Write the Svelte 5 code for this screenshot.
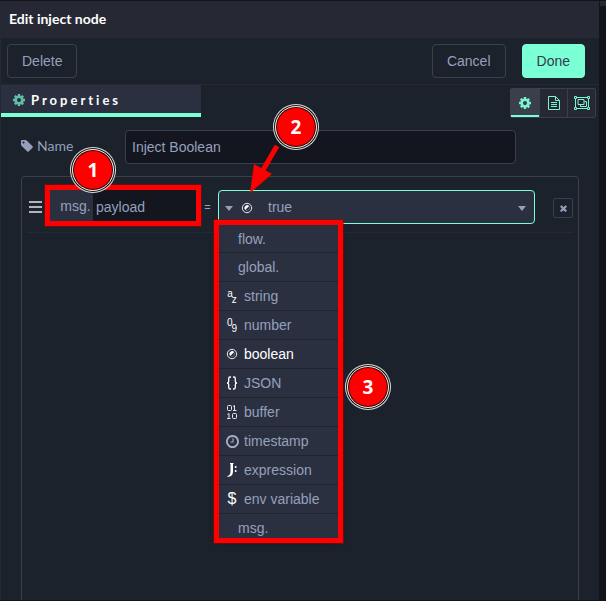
<script>
  const types = [
    { label: 'flow.' },
    { label: 'global.' },
    { label: 'string', icon: 'az' },
    { label: 'number', icon: '09' },
    { label: 'boolean', icon: 'bool' },
    { label: 'JSON', icon: 'json' },
    { label: 'buffer', icon: 'buffer' },
    { label: 'timestamp', icon: 'clock' },
    { label: 'expression', icon: 'expr' },
    { label: 'env variable', icon: 'env' },
    { label: 'msg.' }
  ];

  let name = $state('Inject Boolean');
  let property = $state('payload');
  let value = $state('true');
  let selected = $state('boolean');
  let pane = $state('properties');
</script>

{#snippet cog()}
  <svg class="cog" viewBox="128 128 1536 1536" aria-hidden="true"><path fill="currentColor" d="M1152 896q0-106-75-181t-181-75-181 75-75 181 75 181 181 75 181-75 75-181zm512-109v222q0 12-8 23t-20 13l-185 28q-19 54-39 91 35 50 107 138 10 12 10 25t-9 23q-27 37-99 108t-94 71q-12 0-26-9l-138-108q-44 23-91 38-16 136-29 186-7 28-36 28h-222q-14 0-24.5-8.5t-11.5-21.5l-28-184q-49-16-90-37l-141 107q-10 9-25 9-14 0-25-11-126-114-165-168-7-10-7-23 0-12 8-23 15-21 51-66.5t54-70.5q-27-50-41-99l-183-27q-13-2-21-12.5t-8-23.5v-222q0-12 8-23t19-13l186-28q14-46 39-92-40-57-107-138-10-12-10-24 0-10 9-23 26-36 98.5-107.5t94.5-71.5q13 0 26 10l138 107q44-23 91-38 16-136 29-186 7-28 36-28h222q14 0 24.5 8.5t11.5 21.5l28 184q49 16 90 37l142-107q9-9 24-9 13 0 25 10 129 119 165 170 7 8 7 22 0 12-8 23-15 21-51 66.5t-54 70.5q26 50 41 98l183 28q13 2 21 12.5t8 23.5z" /></svg>
{/snippet}

{#snippet caret()}
  <svg class="caret" viewBox="0 0 8 5" aria-hidden="true"><path fill="currentColor" d="M0 0h8L4 5z" /></svg>
{/snippet}

{#snippet bool()}
  <svg class="glyph" viewBox="0 0 14 14" aria-hidden="true"><circle cx="7" cy="7" r="4.700" fill="none" stroke="#e8e8ec" stroke-width="1" /><path fill="#fff" d="M9.200 5 5.300 8.900A2.700 2.700 0 0 1 9.200 5z" /><path fill="none" stroke="#8d93a5" stroke-width=".6" d="M9.300 5.500A2.700 2.700 0 0 1 5.800 9.300" /></svg>
{/snippet}

{#snippet typeIcon(icon)}
  {#if icon === 'az'}
    <span class="pair"><i>a</i><i>z</i></span>
  {:else if icon === '09'}
    <span class="pair"><i>0</i><i>9</i></span>
  {:else if icon === 'bool'}
    {@render bool()}
  {:else if icon === 'json'}
    <svg class="glyph" viewBox="0 0 14 14" aria-hidden="true"><path fill="none" stroke="#fff" stroke-width="1.3" d="M6 1H5Q3.700 1 3.700 2.500v2.700Q3.700 7 2 7q1.700 0 1.700 1.800v2.700Q3.700 13 5 13h1M8 1h1q1.300 0 1.300 1.500v2.700Q10.300 7 12 7q-1.700 0-1.700 1.800v2.700Q10.300 13 9 13H8" /></svg>
  {:else if icon === 'buffer'}
    <svg class="glyph" viewBox="0 0 14 14" aria-hidden="true"><g fill="none" stroke="#e8e8ec" stroke-width="1"><rect x="2.500" y=".5" width="4" height="5" rx="1" /><path d="M8 1.500 9.500.5V6M8 5.500h3.500M2.500 9.500 4 8.500V14M2 13.500h3.500" /><rect x="7.500" y="8.500" width="4" height="5" rx="1" /></g></svg>
  {:else if icon === 'clock'}
    <svg class="clock" viewBox="128 128 1536 1536" aria-hidden="true"><path fill="currentColor" d="M1024 544v448q0 14-9 23t-23 9h-320q-14 0-23-9t-9-23v-64q0-14 9-23t23-9h224v-352q0-14 9-23t23-9h64q14 0 23 9t9 23zm416 352q0-148-73-273t-198-198-273-73-273 73-198 198-73 273 73 273 198 198 273 73 273-73 198-198 73-273zm224 0q0 209-103 385.500t-279.500 279.500-385.500 103-385.500-103-279.500-279.500-103-385.500 103-385.500 279.500-279.500 385.500-103 385.500 103 279.500 279.500 103 385.500z" /></svg>
  {:else if icon === 'expr'}
    <svg class="glyph" viewBox="0 0 14 14" aria-hidden="true"><path fill="#fff" d="M5 0h3.500v1H8v7.500q0 5-5.500 5.500v-1q3-.8 3-4.500V1H5z" /><circle cx="10.700" cy="4" r="1" fill="#fff" /><circle cx="10.700" cy="8" r="1" fill="#fff" /></svg>
  {:else if icon === 'env'}
    <span class="dollar">$</span>
  {/if}
{/snippet}

<div class="editor">
  <main class="tray">
    <header><h1>Edit inject node</h1></header>

    <div class="toolbar">
      <button class="btn delete" type="button">Delete</button>
      <button class="btn" type="button">Cancel</button>
      <button class="btn primary" type="button">Done</button>
    </div>

    <div class="tabs">
      <div class="tab">{@render cog()}<h2>Properties</h2></div>
      <div class="panes" role="tablist">
        <button type="button" role="tab" aria-label="Properties" aria-selected={pane === 'properties'} onclick={() => (pane = 'properties')}>{@render cog()}</button>
        <button type="button" role="tab" aria-label="Description" aria-selected={pane === 'description'} onclick={() => (pane = 'description')}>
          <svg width="12" height="14" viewBox="0 0 12 14" fill="none" stroke="currentColor" aria-hidden="true"><path d="M.5.5h7l4 4v9H.5zM7.500.5v4h4M3 6.500h6M3 8.500h6M3 10.500h6" /></svg>
        </button>
        <button type="button" role="tab" aria-label="Appearance" aria-selected={pane === 'appearance'} onclick={() => (pane = 'appearance')}>
          <svg width="16" height="14" viewBox="0 0 16 14" fill="none" stroke="currentColor" aria-hidden="true"><path d="M3 1.500h10M3 12.500h10M1.500 3v8M14.500 3v8M4 3.500h6v5H4zM10.500 5.500h2v5h-6v-2" /><path d="M.5.5h2v2h-2zM13.500.5h2v2h-2zM.5 11.500h2v2h-2zM13.500 11.500h2v2h-2z" /></svg>
        </button>
      </div>
    </div>

    <form>
      <div class="field">
        <label for="node-name">
          <svg width="12" height="12" viewBox="128 128 1536 1536" aria-hidden="true"><path fill="currentColor" d="M576 448q0-53-37.500-90.500t-90.500-37.500-90.500 37.500-37.500 90.500 37.500 90.500 90.500 37.500 90.500-37.500 37.500-90.500zm1067 576q0 53-37 90l-491 492q-39 37-91 37-53 0-90-37l-715-716q-38-37-64.500-101t-26.500-117v-416q0-52 38-90t90-38h416q53 0 117 26.500t102 64.500l715 714q37 39 37 91z" /></svg>
          Name
        </label>
        <div class="name-box">
          <input id="node-name" type="text" bind:value={name} />
          <span class="badge two">2</span>
        </div>
      </div>

      <div class="list">
        <div class="row">
          <svg class="grip" viewBox="0 0 13 12" aria-hidden="true"><path fill="currentColor" d="M0 0h13v2H0zM0 5h13v2H0zM0 10h13v2H0z" /></svg>
          <div class="prop">
            <button type="button" class="prefix">msg.</button>
            <input type="text" aria-label="Property" bind:value={property} />
            <span class="mark"></span>
            <span class="badge one">1</span>
          </div>
          <span class="equals">=</span>
          <div class="typed">
            <button type="button" class="type" aria-label="Value type" aria-haspopup="listbox" aria-expanded="true">{@render caret()}{@render bool()}</button>
            <select aria-label="Value" bind:value>
              <option>true</option>
              <option>false</option>
            </select>
            <span class="arrow">{@render caret()}</span>

            <div class="menu" role="listbox" aria-label="Value type">
              {#each types as type}
                <button type="button" role="option" class:plain={!type.icon} aria-selected={selected === type.label} onclick={() => (selected = type.label)}>
                  {#if type.icon}<span class="icon">{@render typeIcon(type.icon)}</span>{/if}{type.label}
                </button>
              {/each}
              <span class="mark"></span>
              <span class="badge three">3</span>
            </div>

            <svg class="pointer" width="32" height="50" viewBox="0 0 32 50" aria-hidden="true"><path d="M28 2 14 26" stroke="#f00" stroke-width="5" /><path fill="#f00" d="M1 49 5 20 23 30z" /></svg>
          </div>
          <button type="button" class="remove" aria-label="Remove">
            <svg width="7" height="7" viewBox="302 302 1188 1252" aria-hidden="true"><path fill="currentColor" d="M1490 1322q0 40-28 68l-136 136q-28 28-68 28t-68-28l-294-294-294 294q-28 28-68 28t-68-28l-136-136q-28-28-28-68t28-68l294-294-294-294q-28-28-28-68t28-68l136-136q28-28 68-28t68 28l294 294 294-294q28-28 68-28t68 28l136 136q28 28 28 68t-28 68l-294 294 294 294q28 28 28 68z" /></svg>
          </button>
        </div>
      </div>
    </form>
  </main>
  <aside></aside>
</div>

<style>
  :global(body) {
    background: #12141b;
  }
  .editor, .editor * {
    box-sizing: border-box;
  }
  .editor {
    display: flex;
    min-height: 100vh;
    padding: 1px 0;
    color: #95a0bc;
    background: #12141b;
    font: 14px/20px "Liberation Sans", Arial, sans-serif;
    overflow: hidden;
  }
  .tray {
    flex: 1;
    display: flex;
    flex-direction: column;
    min-width: 0;
    background: #1c222b;
    border-left: 1px solid #252933;
  }
  aside {
    width: 6px;
    margin-left: 1px;
    border-top: 5px solid #262933;
  }
  button, input, select {
    margin: 0;
    font: inherit;
    color: inherit;
    border: 0;
    background: none;
  }
  button {
    padding: 0;
    cursor: pointer;
  }
  svg {
    display: block;
    flex: none;
  }
  header {
    padding: 8px 8px 9px;
    background: #262933;
  }
  h1, h2 {
    margin: 0;
    color: #fff;
    font: bold 14px/20px Lato, sans-serif;
  }
  .toolbar {
    display: flex;
    align-items: center;
    gap: 16px;
    height: 47px;
    padding: 0 14px 0 6px;
    border-bottom: 1px solid #262933;
  }
  .btn {
    height: 34px;
    padding: 0 14px;
    border: 1px solid #3b3f4b;
    border-radius: 4px;
  }
  .delete {
    margin-right: auto;
  }
  .primary {
    color: #323b4c;
    background: #7bffd5;
    border-color: #7bffd5;
  }
  .tabs {
    display: flex;
    justify-content: space-between;
    align-items: flex-start;
    padding-right: 3px;
  }
  .tab {
    display: flex;
    align-items: center;
    gap: 6px;
    width: 200px;
    height: 32px;
    padding: 2px 0 0 12px;
    background: #2b3041;
    border-bottom: 4px solid #7bffd5;
  }
  .tab .cog {
    color: #5fbfa8;
  }
  h2 {
    font-size: 13px;
    letter-spacing: 3px;
  }
  .cog {
    width: 12px;
    height: 12px;
  }
  .panes {
    display: flex;
    margin-top: 3px;
    border: 1px solid #3b3f4b;
    border-radius: 2px;
  }
  .panes button {
    display: grid;
    place-items: center;
    width: 28px;
    height: 28px;
    color: #7bf5cf;
    background: #262933;
  }
  .panes button + button {
    border-left: 1px solid #3b3f4b;
  }
  .panes [aria-selected="true"] {
    background: #3b3f4b;
    box-shadow: inset 0 -2px #7bffd5;
  }
  form {
    flex: 1;
    display: flex;
    flex-direction: column;
    padding: 12px 20px 0;
  }
  .field {
    display: flex;
    align-items: center;
    margin-bottom: 12px;
  }
  .field label {
    display: flex;
    align-items: center;
    gap: 4px;
    width: 104px;
    padding-bottom: 2px;
    font-family: Lato, sans-serif;
  }
  .name-box {
    position: relative;
    flex: 1;
    max-width: 70%;
  }
  #node-name {
    display: block;
    width: 100%;
    height: 34px;
    padding: 0 6px;
    background: #14161f;
    border: 1px solid #3b3f4b;
    border-radius: 4px;
  }
  .list {
    flex: 1;
    padding: 0 5px;
    border: 1px solid #3b3f4b;
    border-bottom: 0;
    border-radius: 4px 4px 0 0;
  }
  .row {
    display: flex;
    align-items: center;
    padding: 13px 0 8px;
    border-bottom: 1px solid #262933;
  }
  .grip {
    width: 13px;
    height: 12px;
    margin: 0 8px 0 2px;
    color: #b4b5ba;
  }
  .prop {
    position: relative;
    align-self: flex-start;
    display: flex;
    width: 146px;
    height: 31px;
    background: #14161f;
  }
  .prefix {
    width: 43px;
    padding-left: 8px;
    background: #2b3041;
  }
  .prop input {
    flex: 1;
    min-width: 0;
    padding: 3px 3px 0;
  }
  .equals {
    width: 22px;
    padding-left: 1px;
    font-size: 11px;
    text-align: center;
  }
  .typed {
    position: relative;
    flex: 1;
    display: flex;
    min-width: 0;
    height: 34px;
    background: #2b3041;
    border: 1px solid #7bffd5;
    border-radius: 4px;
  }
  .type {
    display: flex;
    align-items: center;
    gap: 7px;
    padding: 2px 6px 0;
  }
  .caret {
    width: 8px;
    height: 5px;
  }
  .glyph {
    width: 14px;
    height: 14px;
  }
  select {
    flex: 1;
    min-width: 0;
    padding: 0 8px;
    appearance: none;
  }
  select option {
    background: #2b3041;
  }
  .arrow {
    position: absolute;
    right: 8px;
    top: 15px;
    pointer-events: none;
  }
  .remove {
    display: grid;
    place-items: center;
    width: 20px;
    height: 20px;
    margin: 2px 0 0 18px;
    border: 1px solid #3b3f4b;
    border-radius: 2px;
  }
  .menu {
    position: absolute;
    z-index: 1;
    top: 34px;
    left: 0;
    width: 119px;
    background: #2b3041;
    box-shadow: 0 4px 8px #0006;
  }
  .menu button {
    display: flex;
    align-items: center;
    gap: 5px;
    width: 100%;
    height: 29px;
    padding-left: 6px;
    text-align: left;
    border-bottom: 1px solid #1f242e;
  }
  .menu button:first-of-type {
    height: 28px;
  }
  .menu button:last-of-type {
    height: 24px;
    padding-top: 4px;
    border-bottom: 0;
  }
  .menu .plain {
    padding-left: 19px;
  }
  .menu [aria-selected="true"] {
    color: #fff;
  }
  .icon {
    display: grid;
    place-items: center;
    width: 14px;
    color: #fff;
  }
  .clock {
    width: 13px;
    height: 13px;
    color: #a3adc6;
  }
  .pair {
    display: flex;
    font-size: 10px;
    line-height: 9px;
  }
  .pair i {
    font-style: normal;
    padding-bottom: 6px;
  }
  .pair i + i {
    margin-left: -1px;
    padding: 6px 0 0;
  }
  .dollar {
    font-size: 16px;
  }
  .mark {
    position: absolute;
    inset: -5px;
    border: 5px solid #f00;
    box-shadow: 0 0 0 1px #a0000080;
    pointer-events: none;
  }
  .badge {
    position: absolute;
    z-index: 3;
    display: grid;
    place-items: center;
    width: 42px;
    height: 42px;
    color: #fff;
    background: #f00;
    border: 1px solid #eee;
    border-radius: 50%;
    box-shadow: inset 0 0 0 1px #111, 0 0 0 1px #111, 0 0 0 2px #ddd;
    font: bold 19px/24px "Open Sans", sans-serif;
    pointer-events: none;
  }
  .one {
    left: 22px;
    top: -41px;
  }
  .two {
    left: 150px;
    top: -24px;
  }
  .three {
    left: 128px;
    top: 141px;
  }
  .pointer {
    position: absolute;
    z-index: 2;
    left: 30px;
    top: -47px;
    pointer-events: none;
  }
</style>
